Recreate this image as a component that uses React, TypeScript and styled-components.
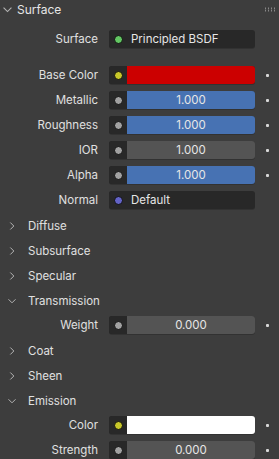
import styled, { createGlobalStyle } from 'styled-components';

const GlobalStyle = createGlobalStyle`
  html, body {
    margin: 0;
    padding: 0;
    background: #3d3d3d;
  }
  body {
    font-family: Inter, "Noto Sans", sans-serif;
    color: #e6e6e6;
  }
`

const Panel = styled.div`
  width: 279px;
  height: 459px;
  overflow: hidden;
  background: #3d3d3d;
  font-size: 11.5px;
`

const PanelHeader = styled.div`
  height: 18px;
  display: flex;
  align-items: center;
  padding: 0 3px;
  margin-bottom: 9px;
  font-size: 12px;
  color: #e6e6e6;
`

const HeaderTitle = styled.span`
  margin-left: 5px;
  flex: 1;
`

const Grip = styled.div`
  width: 11px;
  height: 5px;
  margin-right: 1px;
  background-image: radial-gradient(circle, #9a9a9a 0.7px, transparent 0.9px);
  background-size: 3px 2.5px;
`

const PropRow = styled.div`
  display: grid;
  grid-template-columns: 98px 146px 1fr;
  column-gap: 11px;
  height: 25px;
  box-sizing: border-box;
  padding-top: 3px;
`

const Label = styled.div`
  text-align: right;
  line-height: 18px;
  color: #e0e0e0;
  white-space: nowrap;
`

const Field = styled.div`
  height: 18px;
  display: flex;
  border-radius: 3px;
  overflow: hidden;
  background: #282828;
  box-shadow: 0 1px 0 rgba(0, 0, 0, 0.18);
`

const Socket = styled.div`
  width: 18px;
  flex: none;
  display: flex;
  align-items: center;
  justify-content: center;
  background: #282828;
`

const SocketDot = styled.span<{ $color: string }>`
  width: 7px;
  height: 7px;
  border-radius: 50%;
  background: ${p => p.$color};
  border: 1px solid #0f0f0f;
`

const Value = styled.div<{ $bg?: string }>`
  flex: 1;
  background: ${p => p.$bg || '#545454'};
  text-align: center;
  line-height: 18px;
  color: #e6e6e6;
`

const LinkText = styled.div`
  flex: 1;
  line-height: 18px;
  padding-left: 4px;
  color: #e6e6e6;
`

const KeyDot = styled.span`
  width: 3px;
  height: 3px;
  margin-top: 7.5px;
  background: #d8d8d8;
  border-radius: 1px;
`

const Spacer = styled.div`
  height: 11px;
`

const SubHeader = styled.div`
  height: 25px;
  display: flex;
  align-items: center;
  padding-left: 8px;
  color: #e0e0e0;
`

const SubTitle = styled.span`
  margin-left: 12px;
`

const ChevronBox = styled.svg`
  flex: none;
  display: block;
`

const Chevron = ({ open, size = 8 }: { open: boolean; size?: number }) => (
  <ChevronBox width={size} height={size} viewBox="0 0 8 8">
    {open ? (
      <path d="M0.5 2.3 L4 5.8 L7.5 2.3" fill="none" stroke="#b4b4b4" strokeWidth="1" />
    ) : (
      <path d="M2.3 0.5 L5.8 4 L2.3 7.5" fill="none" stroke="#b4b4b4" strokeWidth="1" />
    )}
  </ChevronBox>
)

const SOCKET_GRAY = '#a1a1a1'
const SOCKET_YELLOW = '#c7c729'

const NumberProp = ({ label, value, blue }: { label: string; value: string; blue?: boolean }) => (
  <PropRow>
    <Label>{label}</Label>
    <Field>
      <Socket><SocketDot $color={SOCKET_GRAY} /></Socket>
      <Value $bg={blue ? '#4772b3' : '#545454'}>{value}</Value>
    </Field>
    <KeyDot />
  </PropRow>
)

const ColorProp = ({ label, color }: { label: string; color: string }) => (
  <PropRow>
    <Label>{label}</Label>
    <Field>
      <Socket><SocketDot $color={SOCKET_YELLOW} /></Socket>
      <Value $bg={color} />
    </Field>
    <KeyDot />
  </PropRow>
)

const LinkProp = ({ label, text, color }: { label: string; text: string; color: string }) => (
  <PropRow>
    <Label>{label}</Label>
    <Field>
      <Socket><SocketDot $color={color} /></Socket>
      <LinkText>{text}</LinkText>
    </Field>
  </PropRow>
)

const Section = ({ title, open }: { title: string; open?: boolean }) => (
  <SubHeader>
    <Chevron open={!!open} />
    <SubTitle>{title}</SubTitle>
  </SubHeader>
)

export default function App() {
  return (
    <>
      <GlobalStyle />
      <Panel>
        <PanelHeader>
          <Chevron open size={9} />
          <HeaderTitle>Surface</HeaderTitle>
          <Grip />
        </PanelHeader>

        <LinkProp label="Surface" text="Principled BSDF" color="#63c763" />
        <Spacer />
        <ColorProp label="Base Color" color="#cc0000" />
        <NumberProp label="Metallic" value="1.000" blue />
        <NumberProp label="Roughness" value="1.000" blue />
        <NumberProp label="IOR" value="1.000" />
        <NumberProp label="Alpha" value="1.000" blue />
        <LinkProp label="Normal" text="Default" color="#6363c7" />

        <Section title="Diffuse" />
        <Section title="Subsurface" />
        <Section title="Specular" />
        <Section title="Transmission" open />
        <NumberProp label="Weight" value="0.000" />
        <Section title="Coat" />
        <Section title="Sheen" />
        <Section title="Emission" open />
        <ColorProp label="Color" color="#ffffff" />
        <NumberProp label="Strength" value="0.000" />
      </Panel>
    </>
  )
}
